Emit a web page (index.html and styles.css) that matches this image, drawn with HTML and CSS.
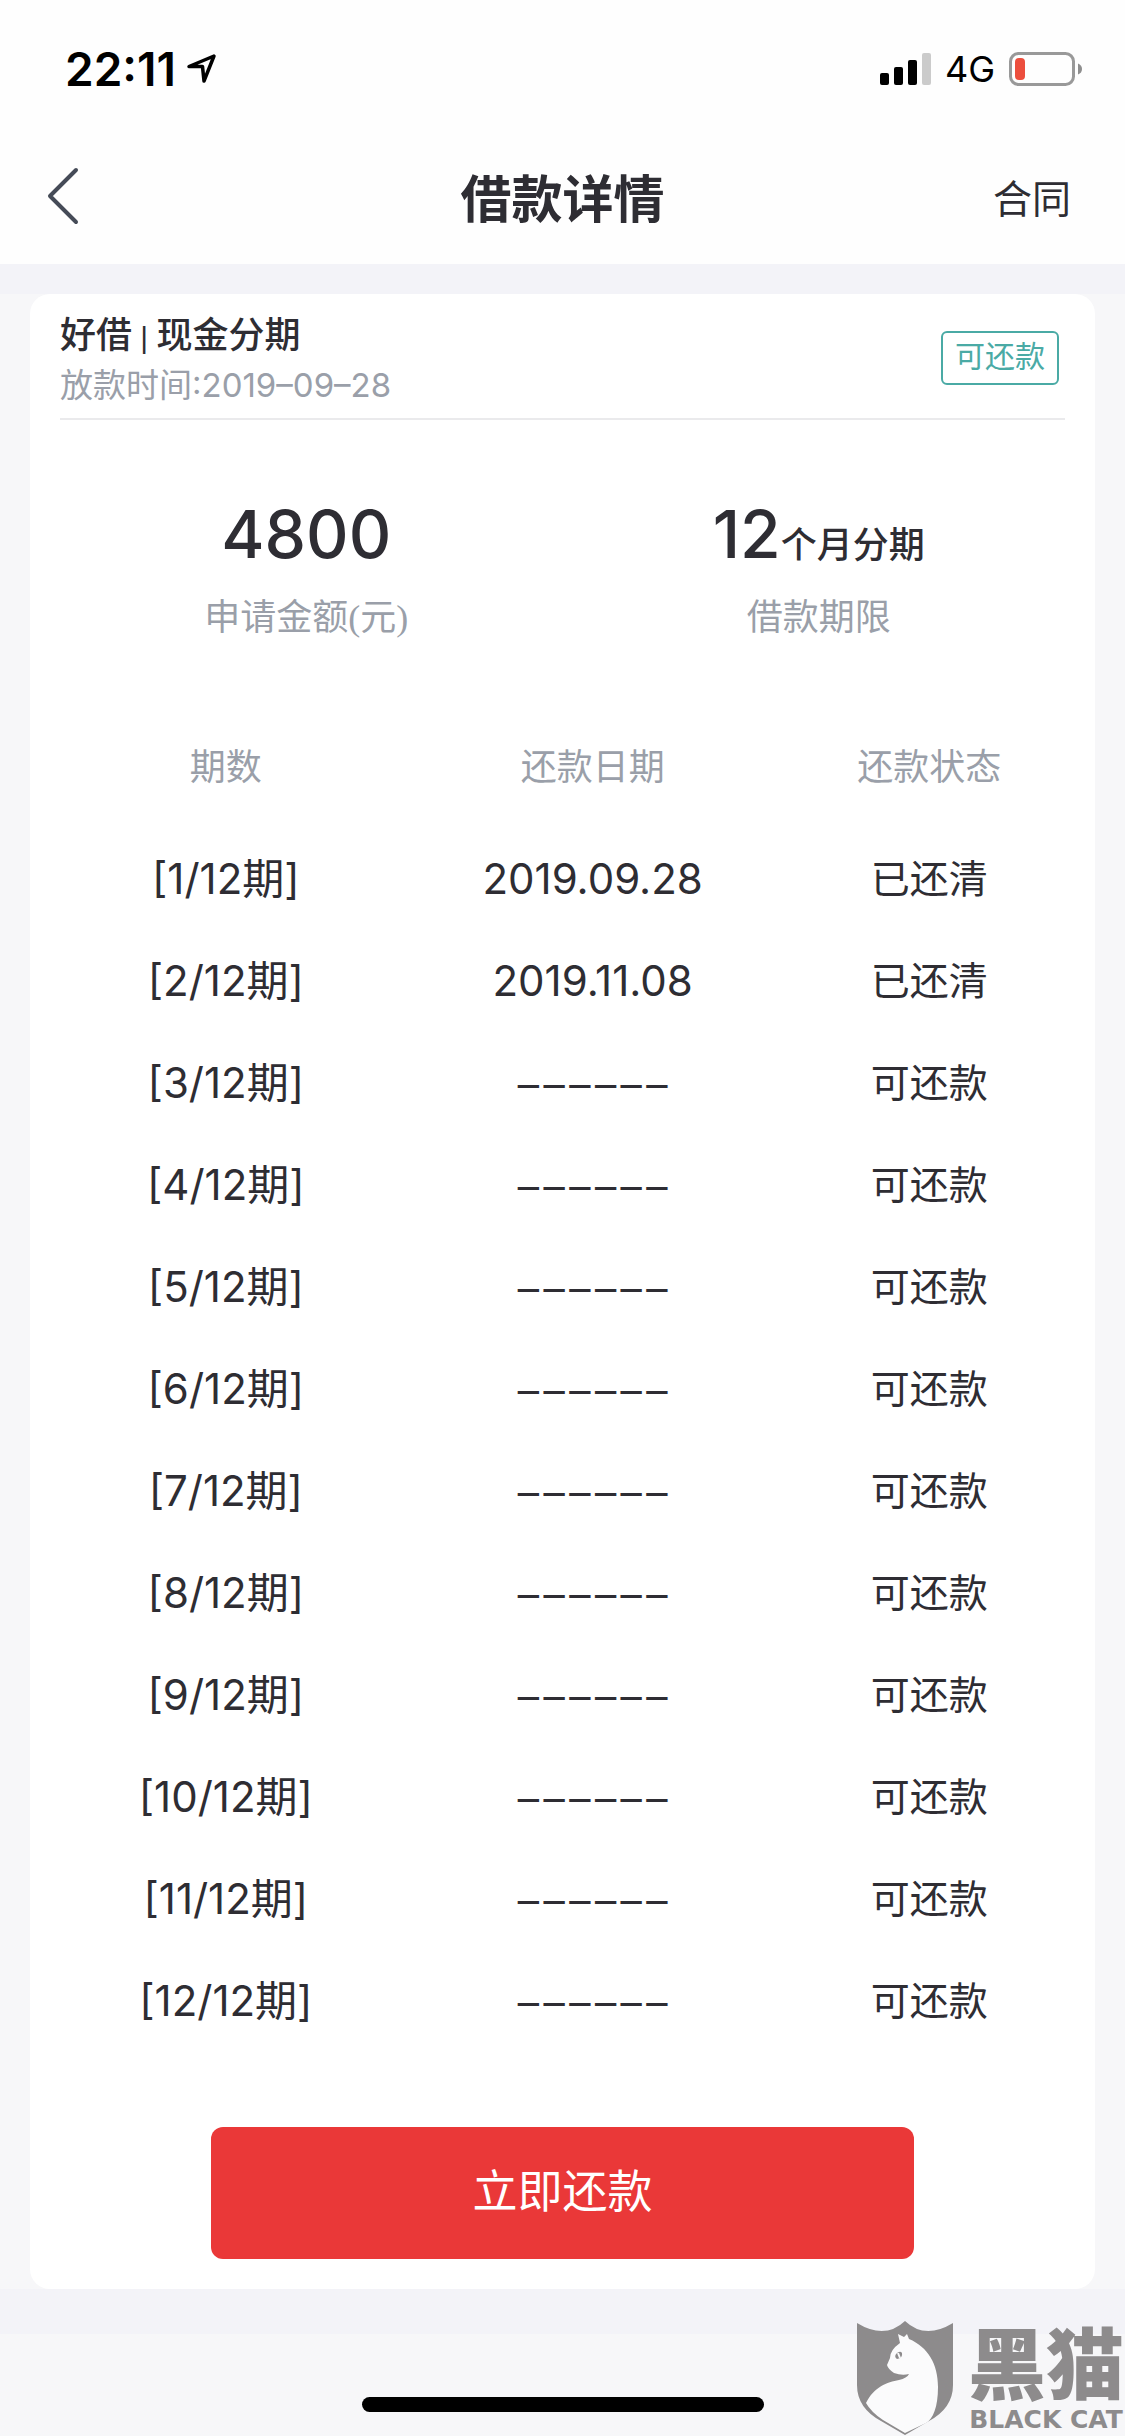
FILE: index.html
```html
<!DOCTYPE html>
<html lang="zh-CN">
<head>
<meta charset="utf-8">
<meta name="viewport" content="width=device-width, initial-scale=1">
<title>借款详情</title>
<link rel="stylesheet" href="styles.css">
</head>
<body>
<div class="status-bar">
  <div class="clock">
    <span>22:11</span>
    <svg class="location" width="32" height="34" viewBox="0 0 32 34" aria-hidden="true"><path d="M28 4 3 14.500H16.500L18 29Z" fill="none" stroke="#000" stroke-width="3.500" stroke-linejoin="round"/></svg>
  </div>
  <div class="indicators">
    <svg width="51" height="34" viewBox="0 0 51 34" aria-hidden="true">
      <rect x="0" y="21" width="9" height="12" rx="2"/><rect x="14" y="15" width="9" height="18" rx="2"/><rect x="28" y="8" width="9" height="25" rx="2"/><rect x="42" y="1" width="9" height="32" rx="2" fill="#cbcbcb"/>
    </svg>
    <span class="network">4G</span>
    <svg width="74" height="34" viewBox="0 0 74 34" aria-hidden="true">
      <rect x="1.500" y="1.500" width="63" height="31" rx="8" fill="none" stroke="#999" stroke-width="3"/>
      <rect x="6" y="6" width="10" height="22" rx="4" fill="#ec4e3d"/>
      <path d="M69 11.500Q73 13 73 17T69 22.500Z" fill="#8e8e8e"/>
    </svg>
  </div>
</div>
<header class="nav">
  <button class="back" type="button" aria-label="返回"><svg width="34" height="60" viewBox="0 0 34 60" aria-hidden="true"><path d="M30 4 4 30 30 56" fill="none" stroke="#454b57" stroke-width="4" stroke-linecap="round" stroke-linejoin="round"/></svg></button>
  <h1 class="nav-title">借款详情</h1>
  <a class="contract" href="#contract">合同</a>
</header>
<main class="page">
  <div class="card-wrap">
    <section class="card">
      <div class="loan">
        <div>
          <h2 class="loan-name">好借<span class="divider"> | </span>现金分期</h2>
          <p class="loan-date">放款时间:2019–09–28</p>
        </div>
        <span class="badge">可还款</span>
      </div>
      <div class="summary">
        <div class="figure">
          <p class="value">4800</p>
          <p class="label">申请金额<span class="paren">(</span>元<span class="paren">)</span></p>
        </div>
        <div class="figure">
          <p class="value">12<span class="unit">个月分期</span></p>
          <p class="label">借款期限</p>
        </div>
      </div>
      <table class="plan">
        <colgroup><col class="col-term"><col class="col-date"><col class="col-state"></colgroup>
        <thead><tr><th scope="col">期数</th><th scope="col">还款日期</th><th scope="col">还款状态</th></tr></thead>
        <tbody>
          <tr><td>[1/12期]</td><td>2019.09.28</td><td class="state">已还清</td></tr>
          <tr><td>[2/12期]</td><td>2019.11.08</td><td class="state">已还清</td></tr>
          <tr><td>[3/12期]</td><td class="pending">––––––</td><td class="state">可还款</td></tr>
          <tr><td>[4/12期]</td><td class="pending">––––––</td><td class="state">可还款</td></tr>
          <tr><td>[5/12期]</td><td class="pending">––––––</td><td class="state">可还款</td></tr>
          <tr><td>[6/12期]</td><td class="pending">––––––</td><td class="state">可还款</td></tr>
          <tr><td>[7/12期]</td><td class="pending">––––––</td><td class="state">可还款</td></tr>
          <tr><td>[8/12期]</td><td class="pending">––––––</td><td class="state">可还款</td></tr>
          <tr><td>[9/12期]</td><td class="pending">––––––</td><td class="state">可还款</td></tr>
          <tr><td>[10/12期]</td><td class="pending">––––––</td><td class="state">可还款</td></tr>
          <tr><td>[11/12期]</td><td class="pending">––––––</td><td class="state">可还款</td></tr>
          <tr><td>[12/12期]</td><td class="pending">––––––</td><td class="state">可还款</td></tr>
        </tbody>
      </table>
      <button class="repay" type="button">立即还款</button>
    </section>
  </div>
</main>
<footer class="home"><div class="home-bar"></div></footer>
<div class="watermark">
  <svg width="98" height="116" viewBox="0 0 98 116" aria-hidden="true">
    <path d="M1 3Q29 20 49 1Q69 20 97 3V65Q97 88 73 101L49 115 25 101Q1 88 1 65Z" fill="#8d8b8c"/>
    <path d="M42 14 48 17 51 14 53 19C72 27 82 44 82 67C82 87 77 99 70 103L49 113 27 100Q15 92 10 83C18 67 31 62 43 60Q51 58 53 54Q46 56 38 53Q32 49 31 45L34 38Q34 30 44 23Z" fill="#fbfbfc"/>
    <path d="M40 34q4-4 6-1q1 5-5 6q-3-2-1-5Z" fill="#8d8b8c"/><path d="m42 33 2 5" stroke="#fbfbfc" stroke-width="2"/>
  </svg>
  <div class="brand"><span class="brand-cn">黑猫</span><span class="brand-en">BLACK CAT</span></div>
</div>
</body>
</html>
```
FILE: styles.css
```css
* { box-sizing: border-box; }
body {
  position: relative;
  display: flex;
  flex-direction: column;
  min-height: 100vh;
  margin: 0;
  background: #f7f7f9;
  color: #2e2d33;
  font-family: Inter, "Noto Sans CJK SC", sans-serif;
}
h1, h2, p { margin: 0; }
button { border: 0; font-family: inherit; }

.status-bar {
  display: flex;
  justify-content: space-between;
  align-items: center;
  height: 132px;
  padding: 6px 42px 0 65px;
  background: #fefefe;
  color: #000;
}
.clock, .indicators { display: flex; align-items: center; }
.clock { gap: 10px; font-size: 46px; font-weight: 600; }
.indicators { gap: 14px; }
.network { font-size: 36px; }

.nav {
  display: grid;
  grid-template-columns: 1fr auto 1fr;
  align-items: center;
  height: 132px;
  padding: 0 54px 4px;
  background: #fefefe;
}
.back { display: flex; justify-self: start; margin-left: -8px; padding: 0; background: none; }
.nav-title { font-size: 51px; font-weight: 700; }
.contract { justify-self: end; color: inherit; font-size: 39px; text-decoration: none; }

.page { padding: 30px 0 45px; background: #f3f3f8; }
.card-wrap { padding: 0 30px; background: #f7f7f9; }
.card { padding: 0 30px 30px; border-radius: 20px; background: #fff; }

.loan {
  display: flex;
  justify-content: space-between;
  align-items: center;
  padding: 16px 6px 8px 0;
  border-bottom: 2px solid #eaeaec;
}
.loan-name { font-size: 36px; line-height: 50px; font-weight: 500; }
.divider { font-family: "Liberation Sans", sans-serif; font-size: 30px; line-height: 1; font-weight: 400; }
.loan-date { color: #9a9fa9; font-size: 33px; line-height: 50px; }
.badge {
  margin-bottom: 4px;
  padding: 0 12px 4px;
  border: 2px solid #4aaaa5;
  border-radius: 6px;
  color: #4aaaa5;
  font-size: 30px;
  line-height: 46px;
}

.summary { display: grid; grid-template-columns: 1fr 1fr; margin: 0 -10px; padding: 66px 0 50px; }
.figure { text-align: center; }
.value { font-size: 66px; line-height: 96px; font-weight: 500; }
.unit { font-size: 36px; line-height: 1; }
.label { color: #9a9fa9; font-size: 36px; line-height: 70px; }
.paren { font-family: "Liberation Serif", serif; }

.plan { width: 100%; table-layout: fixed; border-collapse: collapse; text-align: center; }
.col-term { width: 33%; }
.col-date { width: 40%; }
.col-state { width: 27%; }
.plan th { height: 126px; padding: 0 0 4px; color: #9a9fa9; font-size: 36px; font-weight: 400; }
.plan td { height: 102px; padding: 0 0 2px; font-size: 42px; line-height: 60px; }
.plan .state { font-size: 39px; }
.plan .pending { padding-bottom: 10px; font-family: "Noto Sans CJK SC", sans-serif; font-size: 48px; }

.repay {
  display: block;
  width: 70%;
  height: 132px;
  margin: 74px auto 0;
  padding: 0 0 10px;
  border-radius: 12px;
  background: #ea3838;
  color: #fff;
  font-size: 45px;
}

.home { display: flex; flex: 1; justify-content: center; align-items: flex-end; min-height: 100px; padding-bottom: 24px; }
.home-bar { width: 402px; height: 15px; border-radius: 8px; background: #000; }

.watermark { position: absolute; right: 1px; bottom: 0; display: flex; gap: 14px; color: #8d8b8c; }
.brand { display: flex; flex-direction: column; align-items: center; justify-content: flex-end; padding-bottom: 2px; }
.brand-cn { font-size: 78px; line-height: 80px; font-weight: 900; }
.brand-en { font-family: "DejaVu Sans", sans-serif; font-size: 25px; line-height: 28px; font-weight: 700; }
```
